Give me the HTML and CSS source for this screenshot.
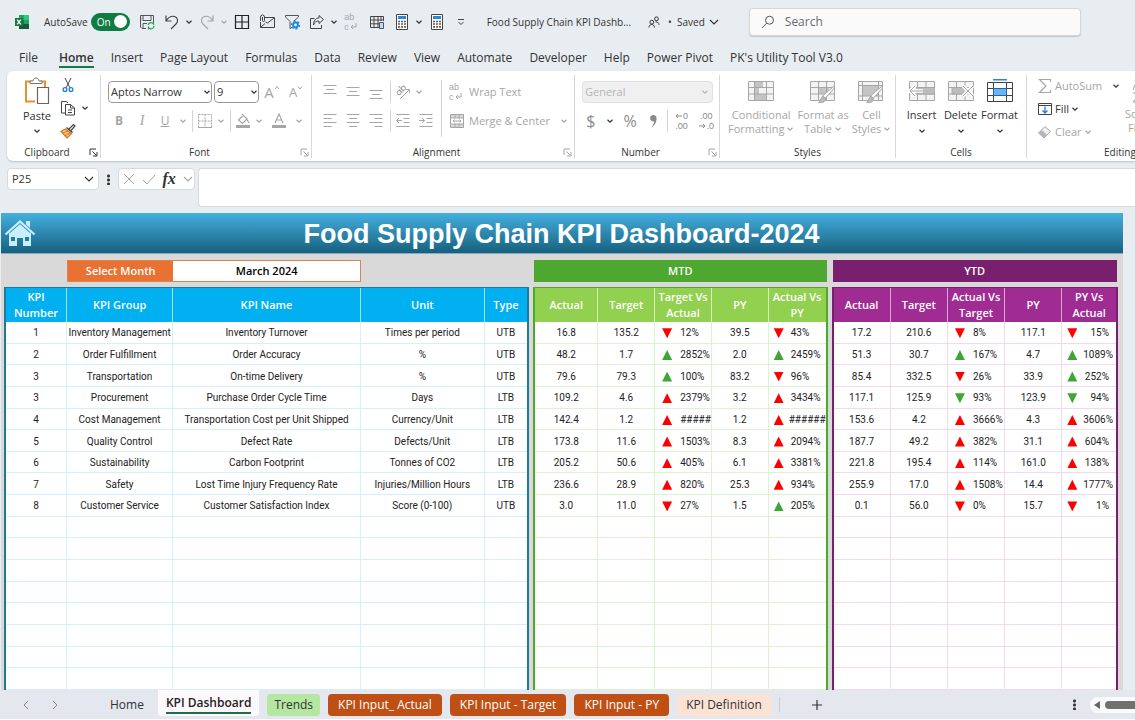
FILE: index.html
```html
<!DOCTYPE html>
<html lang="en">
<head>
<meta charset="utf-8">
<title>Food Supply Chain KPI Dashboard</title>
<link rel="stylesheet" href="styles.css">
</head>
<body>
<svg class="defs" aria-hidden="true">
  <symbol id="chev" viewBox="0 0 8 8"><path d="M1.5 2.8 4 5.2 6.500 2.800" fill="none" stroke="currentColor" stroke-width="1.2"/></symbol>
  <symbol id="wide" viewBox="0 0 12 12"><path d="m2 4 4 4 4-4" fill="none" stroke="currentColor" stroke-width="1.1"/></symbol>
  <symbol id="launch" viewBox="0 0 9 9"><path d="M1 7V1h6M3.500 3.500l4 4M8 4v4H4" fill="none" stroke="currentColor"/></symbol>
  <symbol id="calc" viewBox="0 0 12 16"><path d="M.5.5h11v15H.5z" fill="#fff" stroke="#444"/><path d="M2 2h8v3H2z" fill="#2b88d8"/><path d="M2 7.500h2M5 7.500h2M8 7.500h2M2 10h2M5 10h2M8 10h2M2 12.800h2M5 12.800h2M8 12.800h2" stroke="#6b5a4e" stroke-width="1.700"/></symbol>
</svg>

<header class="titlebar">
  <svg class="logo" viewBox="0 0 16 16"><path d="M5 1h10v14H5z" fill="#21a366"/><path d="M10 1h5v5h-5z" fill="#33c481"/><path d="M5 6h5v5H5z" fill="#107c41"/><path d="M5 10h10v5H5z" fill="#185c37"/><path d="M1 4h8v8H1z" fill="#107c41"/><path d="m3.200 5.700 3.600 4.700M6.800 5.700 3.200 10.400" stroke="#fff" stroke-width="1.300"/></svg>
  <label class="autosave">AutoSave <input type="checkbox" class="toggle-input" checked><span class="toggle">On</span></label>
  <div class="qat">
    <button aria-label="Save"><svg class="i16" viewBox="0 0 16 16"><path d="M7 14.500H3L1.500 13V1.500h13V8M4 1.500v5h8v-5M4 14V9.500h4" fill="none" stroke="#555"/><path d="M3 3v4" stroke="#b4a0a8"/><path d="M9 11a3 3 0 0 1 5.500-1v-2M15 12a3 3 0 0 1-5.500 1.500v2" fill="none" stroke="#21a34a" stroke-width="1.200"/></svg></button>
    <button aria-label="Undo"><svg class="i16" viewBox="0 0 16 16"><path d="M2 1.500V7h5.500M2 7c2-3 5-5.500 8.500-4.500s4 5 1.500 7.500l-5 5" fill="none" stroke="#444" stroke-width="1.200"/></svg></button>
    <button class="arrow" aria-label="Undo list"><svg class="i8"><use href="#chev"/></svg></button>
    <button class="off" aria-label="Redo"><svg class="i16" viewBox="0 0 16 16"><path d="M14 1.500V7H8.500M14 7c-2-3-5-5.500-8.500-4.500S1.500 7.500 4 10l5 5" fill="none" stroke="currentColor" stroke-width="1.200"/></svg></button>
    <button class="arrow off" aria-label="Redo list"><svg class="i8"><use href="#chev"/></svg></button>
    <button aria-label="Borders"><svg class="i16" viewBox="0 0 16 16"><path d="M1.500 1.500h13v13h-13zM8 1.500v13M1.500 8h13" fill="none" stroke="#222" stroke-width="1.200"/></svg></button>
    <button aria-label="Email"><svg class="i16" viewBox="0 0 16 16"><path d="M6 3.500h9.500v10H1.500V8M6.500 8l2 1 6.500-5M1.500 13.500l4.500-4" fill="none" stroke="#444"/><path d="M1.500 7V3a1.500 1.500 0 0 1 4 0v3.500a1 1 0 0 1-2 0V3" fill="none" stroke="#444"/></svg></button>
    <button aria-label="Filter settings"><svg class="i16" viewBox="0 0 16 16"><path d="M9.500 7.500 14.500 3V1.500h-13V3L6 7.500v7l2-1" fill="none" stroke="#555"/><circle cx="11.500" cy="11" r="2.400" fill="none" stroke="#1e88e5" stroke-width="2"/><circle cx="11.500" cy="11" r="3.900" fill="none" stroke="#1e88e5" stroke-width="1.400" stroke-dasharray="2 2"/></svg></button>
    <button aria-label="Share"><svg class="i16" viewBox="0 0 16 16"><path d="M5.500 4.500h-4v10h11V11M10 1.500l4.500 4-4.500 4V7C7.500 7 5.500 8 4.500 11 4.500 7 6.500 4 10 4z" fill="none" stroke="#444"/></svg></button>
    <button class="arrow" aria-label="Share options"><svg class="i8"><use href="#chev"/></svg></button>
    <button class="off" aria-label="Wrap text"><span class="glyph">ab<br>c<svg class="turn" viewBox="0 0 8 7"><path d="M7 0v4H2M4 2 2 4l2 2" fill="none" stroke="currentColor"/></svg></span></button>
    <button aria-label="Table"><svg class="i16" viewBox="0 0 16 16"><path d="M10 13.500H1.500v-11h13V7M1.500 6h13M1.500 9.800H10M5 2.500v11M9 2.500v11M12 2.500V7" fill="none" stroke="#444"/><path d="M10.500 8.500h4v6h-4z" fill="#b9dcf5" stroke="#555"/></svg></button>
    <button aria-label="Calculate now"><svg class="i16"><use href="#calc"/></svg></button>
    <button class="arrow" aria-label="Calculation options"><svg class="i8"><use href="#chev"/></svg></button>
    <button aria-label="Calculator"><svg class="i16"><use href="#calc"/></svg></button>
    <button class="arrow last" aria-label="Customize toolbar"><svg class="i8" viewBox="0 0 8 8"><path d="M1 1.500h6M1.500 4 4 6.500 6.500 4" fill="none" stroke="#444"/></svg></button>
  </div>
  <span class="docname">Food Supply Chain KPI Dashb...</span>
  <svg class="people" viewBox="0 0 12 12"><circle cx="8.500" cy="2.800" r="1.900" fill="none" stroke="#333"/><circle cx="3.800" cy="6.200" r="1.900" fill="none" stroke="#333"/><path d="M1 11.500c0-4 5.500-4 5.500 0M7.500 5.800c2 0 3.500 1 3.500 3" fill="none" stroke="#333"/></svg>
  <button class="saved">•&nbsp; Saved <svg class="i12"><use href="#wide"/></svg></button>
  <label class="search"><svg class="i14" viewBox="0 0 14 14"><circle cx="8.500" cy="5.200" r="4" fill="none" stroke="#555"/><path d="M5.600 8.200 1 13" stroke="#555"/></svg><input type="search" placeholder="Search" aria-label="Search"></label>
</header>

<nav class="menu">
  <a href="#">File</a><a href="#" class="current">Home</a><a href="#">Insert</a><a href="#">Page Layout</a><a href="#">Formulas</a><a href="#">Data</a><a href="#">Review</a><a href="#">View</a><a href="#">Automate</a><a href="#">Developer</a><a href="#">Help</a><a href="#">Power Pivot</a><a href="#">PK's Utility Tool V3.0</a>
</nav>

<section class="ribbon">
  <div class="group clipboard">
    <div class="tools split">
      <button class="big"><svg class="i28" viewBox="0 0 28 28"><path d="M9 4.500H3v20h9M17 4.500h5V10" fill="none" stroke="#e8912d" stroke-width="2"/><path d="M7 6.500V4h3c0-4 6-4 6 0h3v2.500z" fill="#fff" stroke="#777"/><path d="M14.500 10.500h11v16h-11z" fill="#fff" stroke="#666" stroke-width="1.200"/></svg><span>Paste</span><svg class="i8"><use href="#chev"/></svg></button>
      <div class="stack">
        <button aria-label="Cut"><svg class="i16" viewBox="0 0 16 16"><path d="m5 1 5 10M11 1 6 11" stroke="#444" fill="none"/><circle cx="5" cy="12.500" r="1.900" fill="none" stroke="#1e7fd0" stroke-width="1.300"/><circle cx="11" cy="12.500" r="1.900" fill="none" stroke="#1e7fd0" stroke-width="1.300"/></svg></button>
        <button class="pair" aria-label="Copy"><svg class="i16" viewBox="0 0 16 16"><path d="M5 13H1.500V1.500H6l2 1.500M5.500 4.500h5l4 3.500v7h-9zM10.500 4.500V8h4M8 10h4M8 12.500h4" fill="none" stroke="#444"/></svg><svg class="i8"><use href="#chev"/></svg></button>
        <button aria-label="Format painter"><svg class="i16" viewBox="0 0 16 16"><path d="m9 6 4.500-4.500L15 3l-4 4.500" fill="#fff" stroke="#444" stroke-width="1.200"/><path d="m6.500 4.500 6 5" stroke="#444" stroke-width="1.600"/><path d="M5.500 6 1 8.500 7 15l4.500-4.500z" fill="#f6c58c" stroke="#d9731a" stroke-width="1.200"/><path d="m3 10 5-2M5 12.500l5-2.500" stroke="#d9731a"/></svg></button>
      </div>
    </div>
    <div class="caption options">Clipboard<button class="launch" aria-label="Clipboard options"><svg class="i9"><use href="#launch"/></svg></button></div>
  </div>

  <div class="group font">
    <div class="tools rows">
      <div class="row">
        <span class="combo name"><select aria-label="Font name"><option>Aptos Narrow</option></select><svg class="i8"><use href="#chev"/></svg></span>
        <span class="combo size"><select aria-label="Font size"><option>9</option></select><svg class="i8"><use href="#chev"/></svg></span>
        <button class="off w22 grow" aria-label="Increase font size">A<svg class="i6" viewBox="0 0 6 6"><path d="m1 4 2-2.500L5 4" fill="none" stroke="currentColor"/></svg></button>
        <button class="off w22 shrink" aria-label="Decrease font size">A<svg class="i6" viewBox="0 0 6 6"><path d="m1 1.500 2 2.500 2-2.500" fill="none" stroke="currentColor"/></svg></button>
      </div>
      <div class="row tight">
        <button class="off w22 bold">B</button><button class="off w22 ital">I</button><button class="off w22 under">U</button><button class="off w12" aria-label="Underline style"><svg class="i8"><use href="#chev"/></svg></button>
        <i class="sep"></i>
        <button class="off w18" aria-label="Borders"><svg class="i16" viewBox="0 0 16 16"><path d="M1.500 1.500h13v13h-13zM8 1.500v13M1.500 8h13" fill="none" stroke="currentColor" stroke-dasharray="2 1"/><path d="M1 14.500h14" stroke="currentColor"/></svg></button><button class="off w12" aria-label="Border style"><svg class="i8"><use href="#chev"/></svg></button>
        <i class="sep"></i>
        <button class="off w18" aria-label="Fill color"><svg class="i16" viewBox="0 0 16 16"><path d="m7 1 5 5-4.500 4.500L3.500 7l4-4M12 6.500l2 3.500" fill="none" stroke="currentColor" stroke-width="1.200"/><path d="M1 12h14v3H1z" fill="#a6a6a6"/></svg></button><button class="off w12" aria-label="Fill colors"><svg class="i8"><use href="#chev"/></svg></button>
        <button class="off w26" aria-label="Font color"><svg class="i16" viewBox="0 0 16 16"><path d="m4 10 4-9 4 9M5.500 7h5" fill="none" stroke="currentColor" stroke-width="1.200"/><path d="M1 12h14v3H1z" fill="#a6a6a6"/></svg></button><button class="off w12" aria-label="Font colors"><svg class="i8"><use href="#chev"/></svg></button>
      </div>
    </div>
    <div class="caption options">Font<button class="launch off" aria-label="Font options"><svg class="i9"><use href="#launch"/></svg></button></div>
  </div>

  <div class="group align">
    <div class="tools split">
      <div class="rows">
        <div class="row tight">
          <button class="off w22" aria-label="Top align"><svg class="i16" viewBox="0 0 16 16"><path d="M1.500 1.500h13M4 5.500h8M1.500 9.500h13" stroke="currentColor"/></svg></button><button class="off w22" aria-label="Middle align"><svg class="i16" viewBox="0 0 16 16"><path d="M1.500 3.500h13M4 7.500h8M1.500 11.500h13" stroke="currentColor"/></svg></button><button class="off w22" aria-label="Bottom align"><svg class="i16" viewBox="0 0 16 16"><path d="M1.500 6.500h13M4 10.500h8M1.500 14.500h13" stroke="currentColor"/></svg></button>
          <i class="sep"></i>
          <button class="off w18" aria-label="Orientation"><svg class="i16" viewBox="0 0 16 16"><g transform="rotate(-45 6 6)" fill="none" stroke="currentColor"><circle cx="3" cy="6.500" r="2"/><path d="M5 4v5M7 1.500V9"/><circle cx="9" cy="6.500" r="2"/></g><path d="m5 15 9-9M11 5.500h3.500V9" fill="none" stroke="currentColor"/></svg></button><button class="off w12" aria-label="Orientation list"><svg class="i8"><use href="#chev"/></svg></button>
        </div>
        <div class="row tight">
          <button class="off w22" aria-label="Align left"><svg class="i16" viewBox="0 0 16 16"><path d="M1.500 1.500h13M1.500 5.500h8M1.500 9.500h13M1.500 13.500h8" stroke="currentColor"/></svg></button><button class="off w22" aria-label="Center"><svg class="i16" viewBox="0 0 16 16"><path d="M1.500 1.500h13M4 5.500h8M1.500 9.500h13M4 13.500h8" stroke="currentColor"/></svg></button><button class="off w22" aria-label="Align right"><svg class="i16" viewBox="0 0 16 16"><path d="M1.500 1.500h13M6.500 5.500h8M1.500 9.500h13M6.500 13.500h8" stroke="currentColor"/></svg></button>
          <i class="sep"></i>
          <button class="off w18" aria-label="Decrease indent"><svg class="i16" viewBox="0 0 16 16"><path d="M1.500 1.500h13M8.500 5.500h6M8.500 9.500h6M1.500 13.500h13M7 7.500H1.500M4 5 1.500 7.500 4 10" fill="none" stroke="currentColor"/></svg></button><button class="off w26" aria-label="Increase indent"><svg class="i16" viewBox="0 0 16 16"><path d="M1.500 1.500h13M8.500 5.500h6M8.500 9.500h6M1.500 13.500h13M1 7.500h5.500M4 5l2.500 2.500L4 10" fill="none" stroke="currentColor"/></svg></button>
        </div>
      </div>
      <i class="sep tall"></i>
      <div class="rows">
        <button class="off text"><span class="glyph">ab<br>c<svg class="turn" viewBox="0 0 8 7"><path d="M7 0v4H2M4 2 2 4l2 2" fill="none" stroke="currentColor"/></svg></span>Wrap Text</button>
        <button class="off text"><svg class="i16" viewBox="0 0 16 16"><path d="M1.500 1.500h13v13h-13z" fill="#d9d9d9" stroke="currentColor"/><path d="M2 5h12v6H2z" fill="#fff"/><path d="M1.500 5h13M1.500 11h13M6 1.500V5M10 1.500V5M6 11v3.500M10 11v3.500M4 8h8M5.500 6.500 4 8l1.500 1.500M10.500 6.500 12 8l-1.500 1.500" fill="none" stroke="currentColor"/></svg>Merge &amp; Center<svg class="i8"><use href="#chev"/></svg></button>
      </div>
    </div>
    <div class="caption options">Alignment<button class="launch off" aria-label="Alignment options"><svg class="i9"><use href="#launch"/></svg></button></div>
  </div>

  <div class="group number">
    <div class="tools rows">
      <div class="row"><span class="combo format"><select aria-label="Number format" disabled><option>General</option></select><svg class="i8"><use href="#chev"/></svg></span></div>
      <div class="row tight">
        <button class="w18 sym">$</button><button class="w18" aria-label="Currency list"><svg class="i8"><use href="#chev"/></svg></button><button class="w22 sym">%</button><button class="w22" aria-label="Comma style"><svg class="i16" viewBox="0 0 16 16"><path d="M5 5a3.300 3.300 0 1 1 6.500 1c0 3.500-2 6.500-5 8.500 1.500-2 2.500-4 2.500-6-2 0-4-1-4-3.500z" fill="#8a8a8a"/></svg></button>
        <i class="sep"></i>
        <button class="w22 dec"><span><svg class="i8" viewBox="0 0 8 8"><path d="M7 4H1M3 2 1 4l2 2" fill="none" stroke="currentColor"/></svg>0</span><span>.00</span></button><button class="w22 dec"><span>.00</span><span><svg class="i8" viewBox="0 0 8 8"><path d="M1 4h6M5 2l2 2-2 2" fill="none" stroke="currentColor"/></svg>.0</span></button>
      </div>
    </div>
    <div class="caption options">Number<button class="launch off" aria-label="Number options"><svg class="i9"><use href="#launch"/></svg></button></div>
  </div>

  <div class="group styles">
    <div class="tools bigs">
      <button class="big off"><svg class="i26" viewBox="0 0 26 24"><path d="M.5 2.500h25v19H.5z" fill="#f3f3f3" stroke="currentColor"/><path d="M6 3h9v5H6zM6 9h5v6H6zM6 15h12v6H6z" fill="#c4c4c4"/><path d="M.5 8.500h25M.5 15h25M6.500 2.500v19M18.500 2.500v19" stroke="currentColor"/></svg><span>Conditional<br>Formatting<svg class="i8"><use href="#chev"/></svg></span></button>
      <button class="big off"><svg class="i26" viewBox="0 0 26 24"><path d="M.5 2.500h24v19H.5z" fill="#f3f3f3" stroke="currentColor"/><path d="M9 8h10v7H9z" fill="#c4c4c4"/><path d="M.5 8.500h24M.5 15h24M8.500 2.500v19M16.500 2.500v19" stroke="currentColor"/><path d="m24.500 9-9 10-3-2 11-9.500z" fill="#fff" stroke="currentColor"/><path d="M15.500 19c0 4-3 5.500-7 4.500 2-1 2-4 4-6z" fill="#bbb" stroke="currentColor"/></svg><span>Format as<br>Table<svg class="i8"><use href="#chev"/></svg></span></button>
      <button class="big off"><svg class="i26" viewBox="0 0 26 24"><path d="M.5 2.500h24v19H.5z" fill="#f3f3f3" stroke="currentColor"/><path d="M5 7h16v10H5z" fill="#c4c4c4"/><path d="M.5 6.500h24M.5 17h24M4.500 2.500v19M20.500 2.500v19" stroke="currentColor"/><path d="m24.500 9-9 10-3-2 11-9.500z" fill="#fff" stroke="currentColor"/><path d="M15.500 19c0 4-3 5.500-7 4.500 2-1 2-4 4-6z" fill="#bbb" stroke="currentColor"/></svg><span>Cell<br>Styles<svg class="i8"><use href="#chev"/></svg></span></button>
    </div>
    <div class="caption">Styles</div>
  </div>

  <div class="group cells">
    <div class="tools bigs">
      <button class="big"><svg class="i26 grey" viewBox="0 0 26 24"><path d="M.5 2.500h25v19H.5zM.5 8.500h25M.5 15h25M8.500 2.500v19M17 2.500v19" fill="#f3f3f3" stroke="currentColor"/><path d="M8 8.500h18V15H8z" fill="#bdbdbd" stroke="currentColor"/><path d="M14 12H1M6 7l-5 5 5 5" fill="none" stroke="#fff" stroke-width="3.500"/><path d="M14 12H1M6 7l-5 5 5 5" fill="none" stroke="currentColor"/></svg><span>Insert</span><svg class="i8"><use href="#chev"/></svg></button>
      <button class="big"><svg class="i26 grey" viewBox="0 0 26 24"><path d="M.5 2.500h25v19H.5zM.5 8.500h25M.5 15h25M8.500 2.500v19M17 2.500v19" fill="#f3f3f3" stroke="currentColor"/><path d="M4 8.500h14V15H4z" fill="#bdbdbd" stroke="currentColor"/><path d="m15 7 10 10M25 7 15 17" fill="none" stroke="#fff" stroke-width="3.500"/><path d="m15 7 10 10M25 7 15 17" fill="none" stroke="currentColor"/></svg><span>Delete</span><svg class="i8"><use href="#chev"/></svg></button>
      <button class="big"><svg class="i26" viewBox="0 0 26 24"><path d="M.5 3.500h25v19H.5zM.5 9.500h25M.5 16.500h25M6.500 3.500v19M19.500 3.500v19" fill="#fff" stroke="#444"/><path d="M6.500 9.500h13v7h-13z" fill="#6cb4f0" stroke="#1468b5"/><path d="M6 .5h14" stroke="#1e88d0" stroke-width="2"/></svg><span>Format</span><svg class="i8"><use href="#chev"/></svg></button>
    </div>
    <div class="caption">Cells</div>
  </div>

  <div class="group editing">
    <div class="tools split">
      <div class="stack wide">
        <button class="text"><svg class="i16 grey" viewBox="0 0 16 16"><path d="M13.500 4V1.500h-11L9 8l-6.500 6.500h11V12" fill="none" stroke="currentColor" stroke-width="1.200"/></svg><span class="grey">AutoSum</span><svg class="i8 far"><use href="#chev"/></svg></button>
        <button class="text"><svg class="i16" viewBox="0 0 16 16"><path d="M1.500 2.500h13v11h-13zM1.500 4.500h13" fill="none" stroke="#444"/><path d="M8 5.500V12M5.500 9.500 8 12l2.500-2.500" fill="none" stroke="#1e7fd0" stroke-width="1.300"/></svg><span>Fill</span><svg class="i8"><use href="#chev"/></svg></button>
        <button class="text off"><svg class="i16" viewBox="0 0 16 16"><path d="m8 2.500 5.500 5L7 14 1.500 9z" fill="#eee" stroke="currentColor"/><path d="M1.500 9 5 6l5 5-3 3z" fill="#b5b5b5"/></svg><span>Clear</span><svg class="i8"><use href="#chev"/></svg></button>
      </div>
      <button class="big off sort"><svg class="i26" viewBox="0 0 26 24"><path d="M5 11 9 1l4 10M6.500 7.500h5M5 14h8l-8 9h8M20 2v20M16 18l4 4 4-4" fill="none" stroke="currentColor"/></svg><span>Sort &amp;<br>Filter</span></button>
    </div>
    <div class="caption">Editing</div>
  </div>
</section>

<section class="formula">
  <label class="namebox"><input value="P25" aria-label="Name box"><svg class="i12"><use href="#wide"/></svg></label>
  <span class="dots"></span>
  <div class="fx">
    <button class="off" aria-label="Cancel"><svg class="i14" viewBox="0 0 14 14"><path d="m2 2 10 10M12 2 2 12" stroke="currentColor"/></svg></button>
    <button class="off" aria-label="Enter"><svg class="i14" viewBox="0 0 14 14"><path d="m1 8 4 4 8-9" fill="none" stroke="currentColor"/></svg></button>
    <button class="fxb">fx</button>
    <button class="off arrow" aria-label="Functions"><svg class="i12"><use href="#wide"/></svg></button>
  </div>
  <textarea aria-label="Formula bar"></textarea>
</section>

<main class="sheet">
  <div class="page">
    <div class="banner">
      <a href="#" class="homelink" aria-label="Home"><svg class="house" viewBox="0 0 32 28"><path d="M5 14 16 4l11 10v13h-8v-8h-6v8H5z" fill="#c9efff"/><path d="m1.500 15.500 14.500-13 14.500 13" fill="none" stroke="#c9efff" stroke-width="2.200"/><path d="M6 13.500 16 4.600l10 8.900" fill="none" stroke="#3590b8"/><path d="M22 2h4v7l-4-3.500z" fill="#c9efff"/><path d="M7 18h4v4H7zM21 18h4v4h-4z" fill="#27799f"/></svg></a>
      <h1>Food Supply Chain KPI Dashboard-2024</h1>
    </div>
    <div class="blocks">
      <div class="pick"><label for="month">Select Month</label><select id="month"><option>March 2024</option></select></div>
      <h2 class="mtdh">MTD</h2>
      <h2 class="ytdh">YTD</h2>
      <table class="kpi">
        <colgroup><col class="c1"><col class="c2"><col class="c3"><col class="c4"><col class="c5"></colgroup>
        <thead><tr><th>KPI<br>Number</th><th>KPI Group</th><th>KPI Name</th><th>Unit</th><th>Type</th></tr></thead>
        <tbody id="kpi"></tbody>
      </table>
      <table class="mtd">
        <colgroup><col class="m1"><col><col><col><col></colgroup>
        <thead><tr><th>Actual</th><th>Target</th><th>Target Vs<br>Actual</th><th>PY</th><th>Actual Vs<br>PY</th></tr></thead>
        <tbody id="mtd"></tbody>
      </table>
      <table class="ytd">
        <colgroup><col><col><col><col><col class="y5"></colgroup>
        <thead><tr><th>Actual</th><th>Target</th><th>Actual Vs<br>Target</th><th>PY</th><th>PY Vs<br>Actual</th></tr></thead>
        <tbody id="ytd"></tbody>
      </table>
    </div>
  </div>
</main>

<footer class="tabs">
  <button class="nav" aria-label="Previous sheet"><svg class="i10" viewBox="0 0 10 10"><path d="M7 1 3 5l4 4" fill="none" stroke="#888"/></svg></button>
  <button class="nav" aria-label="Next sheet"><svg class="i10" viewBox="0 0 10 10"><path d="m3 1 4 4-4 4" fill="none" stroke="#888"/></svg></button>
  <button class="tab plain">Home</button>
  <button class="tab active"><span>KPI Dashboard</span></button>
  <button class="tab green">Trends</button>
  <button class="tab rust">KPI Input_ Actual</button>
  <button class="tab rust">KPI Input - Target</button>
  <button class="tab rust">KPI Input - PY</button>
  <button class="tab peach">KPI Definition</button>
  <i class="sep"></i>
  <button class="add" aria-label="New sheet"><svg class="i10" viewBox="0 0 10 10"><path d="M5 0v10M0 5h10" stroke="#333" stroke-width="1.200"/></svg></button>
  <span class="dots end"></span>
  <div class="scroll"><svg class="i8" viewBox="0 0 8 8"><path d="M7 0v8L1 4z" fill="#666"/></svg><span class="thumb"></span></div>
</footer>
<script src="tables.js"></script>
</body>
</html>
```
FILE: styles.css
```css
* { box-sizing: border-box; }
body {
  margin: 0;
  height: 100vh;
  display: flex;
  flex-direction: column;
  overflow: hidden;
  background: #e8edf1;
  color: #333;
  font: 12px/16px "Open Sans", "Noto Sans", sans-serif;
}
button, select, input, textarea { font: inherit; color: inherit; }
button { border: 0; padding: 0; background: none; }
button, a { display: inline-flex; align-items: center; justify-content: center; }
svg { flex: none; display: block; }
.defs { position: absolute; width: 0; height: 0; }
.i6 { width: 6px; height: 6px; }
.i8 { width: 8px; height: 8px; }
.i9 { width: 9px; height: 9px; }
.i10 { width: 10px; height: 10px; }
.i12 { width: 12px; height: 12px; }
.i14 { width: 14px; height: 14px; }
.i16 { width: 16px; height: 16px; }
.i26 { width: 26px; height: 24px; }
.i28 { width: 28px; height: 28px; }
.off, .grey { color: #a6a6a6; }
.glyph { width: 16px; text-align: left; font: 9px/10px "Liberation Sans", Arial, sans-serif; }
.turn { display: inline-block; width: 8px; height: 7px; }
.sep { flex: none; width: 1px; align-self: stretch; background: #d4d4d4; }

.titlebar { flex: none; display: flex; align-items: center; height: 43px; padding: 0 54px 0 14px; }
.logo { width: 16px; height: 16px; margin-right: 14px; }
.autosave { display: flex; align-items: center; gap: 3px; font-size: 10px; white-space: nowrap; }
.toggle-input { position: absolute; opacity: 0; }
.toggle { display: flex; align-items: center; justify-content: space-between; width: 39px; height: 18px; padding: 0 3px 0 6px; border-radius: 9px; background: #107c41; color: #fff; }
.toggle::after { content: ""; width: 13px; height: 13px; border-radius: 50%; background: #fff; }
.qat { display: flex; align-items: center; margin-left: 5px; }
.qat button { width: 25px; height: 24px; }
.qat .arrow { width: 8px; margin-right: 2px; }
.qat .last { margin-left: 7px; }
.docname { margin-left: 20px; font-size: 10px; white-space: nowrap; }
.people { width: 12px; height: 12px; margin-left: 17px; }
.saved { gap: 3px; margin-left: 8px; font-size: 10px; white-space: nowrap; }
.search { flex: 1; display: flex; align-items: center; gap: 10px; height: 28px; margin-left: 29px; padding: 0 11px; border: 1px solid #d3d6d9; border-radius: 4px; background: #fafafa; box-shadow: 0 1px 1px #c4c8cc; }
.search input { flex: 1; min-width: 0; border: 0; padding: 0; background: none; outline: 0; }
.search input::placeholder { color: #6b6b6b; }

.menu { flex: none; display: flex; gap: 17px; height: 28px; padding: 4px 0 0 19px; }
.menu a { height: 21px; color: #333; text-decoration: none; white-space: nowrap; }
.menu .current { font-weight: 600; border-bottom: 2px solid #107c41; padding-top: 2px; margin-left: 4px; }

.ribbon { flex: none; display: flex; height: 90px; margin-left: 7px; border-radius: 6px 0 0 6px; background: #fff; box-shadow: 0 1px 2px #b9bfc6; overflow: hidden; }
.group { flex: none; display: flex; flex-direction: column; justify-content: space-between; margin: 4px 0 3px; border-right: 1px solid #d8d8d8; }
.tools { height: 68px; }
.split { display: flex; }
.caption { display: flex; justify-content: center; position: relative; font-size: 10px; line-height: 12px; color: #333; }
.options { padding-right: 13px; }
.launch { position: absolute; right: 2px; top: 2px; }
.big { flex-direction: column; justify-content: flex-start; font-size: 11px; line-height: 14px; text-align: center; white-space: nowrap; }
.big span svg { display: inline-block; margin-left: 2px; }
.stack { display: flex; flex-direction: column; justify-content: space-between; align-items: flex-start; height: 64px; padding-top: 2px; }
.pair { gap: 5px; }
.rows { display: flex; flex-direction: column; gap: 7px; padding-top: 6px; }
.row { display: flex; align-items: center; height: 22px; gap: 2px; }
.tight { gap: 1px; }
.row .sep { margin: 0 2px; }
.w12 { width: 12px; } .w18 { width: 18px; } .w22 { width: 22px; } .w26 { width: 26px; }

.clipboard { width: 94px; }
.clipboard .big { width: 60px; padding-top: 2px; gap: 4px; }
.clipboard .stack { margin-left: -7px; }
.font { width: 211px; }
.font .rows, .align .rows, .number .rows { padding-left: 7px; }
.combo { position: relative; display: flex; }
.combo select { appearance: none; width: 100%; height: 22px; padding: 0 2px; border: 1px solid #999; border-radius: 4px; background: #fff; font-size: 11px; }
.combo svg { position: absolute; right: 1px; top: 7px; }
.combo.name { width: 104px; }
.combo.size { width: 45px; }
.combo.format { width: 131px; color: #b5b5b5; }
.combo.format select { border-color: #e0e0e0; background: #f0f0f0; opacity: 1; }
.combo.format svg { right: 4px; }
.grow { font-size: 15px; }
.shrink { font-size: 13px; }
.grow svg, .shrink svg { margin-bottom: 8px; }
.bold { font-weight: 700; }
.ital { font-family: "Liberation Serif", serif; font-style: italic; font-size: 14px; }
.under { text-decoration: underline; }
.align { width: 263px; }
.align .split > .rows:first-child { width: 129px; }
.align .sep.tall { margin: 5px 0 6px; }
.text { gap: 4px; height: 22px; justify-content: flex-start; font-size: 11px; white-space: nowrap; }
.align .text > .i8 { margin-left: 6px; }
.number { width: 145px; }
.sym { font-size: 16px; color: #8a8a8a; }
.dec { flex-direction: column; margin-right: 2px; color: #8a8a8a; font: 9px/10px "Liberation Sans", Arial, sans-serif; }
.dec span { display: flex; align-items: center; }
.bigs { display: flex; }
.bigs .big { padding-top: 4px; gap: 5px; }
.styles { width: 176px; }
.styles .tools { padding-left: 8px; gap: 3px; }
.cells { width: 131px; }
.cells .tools { padding-left: 6px; }
.cells .big { width: 39px; }
.editing { flex: 1; min-width: 186px; border: 0; }
.editing .stack { width: 98px; height: 68px; padding-left: 10px; padding-top: 0; }
.editing .text { gap: 2px; }
.editing .far { margin-left: 8px; }
.editing .sort { padding-top: 4px; gap: 4px; }

.formula { flex: none; display: flex; height: 39px; margin: 7px 0 6px 7px; }
.namebox, .fx { display: flex; align-items: center; height: 22px; border: 1px solid #d6dadd; border-radius: 4px; background: #fff; }
.namebox { width: 92px; padding: 0 3px 0 4px; }
.namebox input { flex: 1; min-width: 0; border: 0; padding: 0; background: none; font-size: 11px; }
.dots { width: 3px; height: 11px; margin: 6px 8px; background: radial-gradient(circle, #333 1px, transparent 2px) 0 0 / 3px 4px; }
.fx { width: 77px; justify-content: space-between; padding: 0 0 0 3px; }
.fxb { font: italic 700 16px/16px "Liberation Serif", serif; }
.formula textarea { flex: 1; min-width: 0; margin-left: 3px; border: 1px solid #d6dadd; border-right: 0; border-radius: 4px 0 0 4px; background: #fff; resize: none; }

.sheet { flex: 1; min-height: 0; display: flex; padding: 0 12px 0 1px; }
.page { flex: 1; display: flex; flex-direction: column; background: #d9d9d9; }
.banner { flex: none; display: flex; align-items: center; height: 41px; padding-left: 3px; border-bottom: 1px solid #8fa9b8; background: linear-gradient(#44b0de, #17607f); }
.house { width: 32px; height: 28px; }
.banner h1 { flex: 1; margin: 0; padding: 2px 36px 0 0; text-align: center; color: #fff; font: 700 27px/38px "Liberation Sans", Arial, sans-serif; }
.blocks { flex: 1; min-height: 0; display: grid; grid-template-columns: 526fr 295fr 287fr; grid-template-rows: 22px minmax(0, 1fr); gap: 5px 4px; padding: 6px 5px 0 3px; }
.blocks h2 { margin: 0 1px; color: #fff; text-align: center; font: 600 11px/21px "Open Sans", sans-serif; }
.mtdh { background: #4ea72e; }
.ytdh { background: #78206e; }
.pick { display: flex; margin: 0 32% 0 12%; border: 1px solid #d98452; background: #fff; font-weight: 600; font-size: 11px; line-height: 20px; }
.pick label { flex: 106; background: #e97132; color: #fff; text-align: center; }
.pick select { flex: 188; min-width: 0; appearance: none; border: 0; padding: 0; background: none; color: #000; text-align: center; text-align-last: center; }

table { width: 100%; height: 100%; border-collapse: separate; border-spacing: 0; table-layout: fixed; background: #fff; }
th, td { padding: 0; text-align: center; white-space: nowrap; border-right: 1px solid var(--line); }
th { height: 34px; color: #fff; background: var(--head); font: 600 11px/16px "Open Sans", sans-serif; border-right-color: var(--headline); }
td { padding-top: 2px; border-bottom: 1px solid var(--line); color: #222; font: 10px/16px Roboto, sans-serif; }
th:last-child, td:last-child { border-right: 0; }
table.kpi { --line: #d3f1fb; --head: #00b0f0; --headline: #9fe3ff; border: 2px solid #1f7a99; border-width: 1px 2px 0; }
table.mtd { --line: #dcf2d1; --head: #92d050; --headline: #d5f0b8; border: 2px solid #4ea72e; border-width: 1px 2px 0; }
table.ytd { --line: #f3d9ef; --head: #a02b93; --headline: #dfa5d8; border: 2px solid #78206e; border-width: 1px 2px 0; }
.c1 { width: 11.7%; } .c2 { width: 20.4%; } .c3 { width: 36%; } .c4 { width: 23.8%; } .c5 { width: 8.1%; }
.m1 { width: 21.8%; }
.y5 { width: 19%; }
td .mark { display: flex; align-items: center; justify-content: flex-start; padding-left: 7px; gap: 8px; }
table.mtd td:last-child .mark { padding-left: 5px; gap: 5px; }
table.mtd td:last-child .short { gap: 7px; }
table.ytd td:last-child .mark { padding: 0 3px 0 5px; justify-content: space-between; gap: 0; }
table.ytd td:last-child .short { padding-right: 7px; }
.mark::before { content: ""; flex: none; width: 10px; height: 10px; background: currentColor; }
.mark span { color: #222; }
.up::before { clip-path: polygon(50% 0, 100% 100%, 0 100%); }
.down::before { clip-path: polygon(0 0, 100% 0, 50% 100%); }
.red { color: #f00; }
.grn { color: #3fa535; }

.tabs { flex: none; display: flex; align-items: center; height: 30px; padding-left: 20px; border-bottom: 1px solid #fff; background: #e4e8ee; }
.tab { height: 22px; padding: 0 9px; margin-right: 8px; border-radius: 4px; white-space: nowrap; }
.nav { width: 12px; margin-right: 17px; }
.tab.plain { padding: 0 6px; margin-left: 26px; }
.tab.active { align-self: flex-start; height: 26px; padding: 0 8px; background: #fdf8fc; border-radius: 0 0 4px 4px; font-weight: 600; color: #222; }
.tab.active span { border-bottom: 2px solid #1d7044; line-height: 19px; }
.tab.green { padding: 0 7px; background: #b5e6a2; }
.tab.rust { padding: 0 10px; background: #bf4f14; color: #fff; }
.peach { background: #fbe2d5; }
.tabs .sep { margin: 7px 0; background: #c9cdd3; }
.add { margin-left: 32px; }
.end { margin-left: auto; margin-right: 14px; }
.scroll { display: flex; align-items: center; gap: 4px; width: 45px; height: 16px; padding-left: 3px; border-radius: 8px 0 0 8px; background: #fafafa; }
.thumb { flex: 1; height: 8px; border-radius: 4px 0 0 4px; background: #707070; }
```
FILE: tables.js
```js
// Marks: "v" = down, "^" = up; "r" = red, "g" = green.
const kpi = [
  ["1", "Inventory Management", "Inventory Turnover", "Times per period", "UTB"],
  ["2", "Order Fulfillment", "Order Accuracy", "%", "UTB"],
  ["3", "Transportation", "On-time Delivery", "%", "UTB"],
  ["3", "Procurement", "Purchase Order Cycle Time", "Days", "LTB"],
  ["4", "Cost Management", "Transportation Cost per Unit Shipped", "Currency/Unit", "LTB"],
  ["5", "Quality Control", "Defect Rate", "Defects/Unit", "LTB"],
  ["6", "Sustainability", "Carbon Footprint", "Tonnes of CO2", "LTB"],
  ["7", "Safety", "Lost Time Injury Frequency Rate", "Injuries/Million Hours", "LTB"],
  ["8", "Customer Service", "Customer Satisfaction Index", "Score (0-100)", "UTB"]
];
const mtd = [
  ["16.8", "135.2", "vr12%", "39.5", "vr43%"],
  ["48.2", "1.7", "^g2852%", "2.0", "^g2459%"],
  ["79.6", "79.3", "^g100%", "83.2", "vr96%"],
  ["109.2", "4.6", "^r2379%", "3.2", "^r3434%"],
  ["142.4", "1.2", "^r#####", "1.2", "^r######"],
  ["173.8", "11.6", "^r1503%", "8.3", "^r2094%"],
  ["205.2", "50.6", "^r405%", "6.1", "^r3381%"],
  ["236.6", "28.9", "^r820%", "25.3", "^r934%"],
  ["3.0", "11.0", "vr27%", "1.5", "^g205%"]
];
const ytd = [
  ["17.2", "210.6", "vr8%", "117.1", "vr15%"],
  ["51.3", "30.7", "^g167%", "4.7", "^g1089%"],
  ["85.4", "332.5", "vr26%", "33.9", "^g252%"],
  ["117.1", "125.9", "vg93%", "123.9", "vg94%"],
  ["153.6", "4.2", "^r3666%", "4.3", "^r3606%"],
  ["187.7", "49.2", "^r382%", "31.1", "^r604%"],
  ["221.8", "195.4", "^r114%", "161.0", "^r138%"],
  ["255.9", "17.0", "^r1508%", "14.4", "^r1777%"],
  ["0.1", "56.0", "vr0%", "15.7", "vr1%"]
];
const rowCount = 17;

function cell(value) {
  const mark = /^([v^])([rg])(.+)$/.exec(value);
  if (!mark) return `<td>${value || "&nbsp;"}</td>`;
  const shape = mark[1] === "v" ? "down" : "up";
  const color = mark[2] === "r" ? "red" : "grn";
  const short = mark[3].length < 6 && mark[3] !== "1089%" && mark[3] !== "3606%" && mark[3] !== "1777%" ? " short" : "";
  return `<td><div class="mark ${shape} ${color}${short}"><span>${mark[3]}</span></div></td>`;
}

function fill(id, rows) {
  let html = "";
  for (let i = 0; i < rowCount; i++) {
    html += "<tr>" + (rows[i] || ["", "", "", "", ""]).map(cell).join("") + "</tr>";
  }
  document.getElementById(id).innerHTML = html;
}

fill("kpi", kpi);
fill("mtd", mtd);
fill("ytd", ytd);
```
